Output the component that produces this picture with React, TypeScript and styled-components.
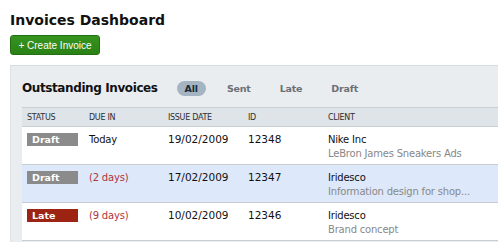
import styled, { createGlobalStyle } from 'styled-components';

type Status = 'draft' | 'late';

interface Invoice {
  status: Status;
  due: string;
  overdue: boolean;
  issued: string;
  id: string;
  client: string;
  project: string;
}

const invoices: Invoice[] = [
  { status: 'draft', due: 'Today', overdue: false, issued: '19/02/2009', id: '12348', client: 'Nike Inc', project: 'LeBron James Sneakers Ads' },
  { status: 'draft', due: '(2 days)', overdue: true, issued: '17/02/2009', id: '12347', client: 'Iridesco', project: 'Information design for shop...' },
  { status: 'late', due: '(9 days)', overdue: true, issued: '10/02/2009', id: '12346', client: 'Iridesco', project: 'Brand concept' },
];

const tabs = ['All', 'Sent', 'Late', 'Draft'];

const GlobalStyle = createGlobalStyle`
  html, body {
    margin: 0;
    padding: 0;
    background: #fff;
  }
  body {
    font-family: "DejaVu Sans", Verdana, sans-serif;
    color: #111;
    overflow: hidden;
  }
`;

const Page = styled.div`
  padding: 11px 0 0 10px;
`;

const Title = styled.h1`
  margin: 0;
  font-size: 14px;
  line-height: 18px;
  font-weight: bold;
  color: #111;
`;

const CreateButton = styled.button`
  display: block;
  margin-top: 6px;
  width: 90px;
  height: 20px;
  padding: 0;
  border: 1px solid #226f12;
  border-radius: 3px;
  background: linear-gradient(#37941f, #2a8116);
  color: #fff;
  font-family: "Liberation Sans", Arial, sans-serif;
  font-size: 10px;
  cursor: pointer;
`;

const Panel = styled.section`
  margin-top: 10px;
  background: #e9edf0;
  border-top: 1px solid #d6dbe0;
  border-left: 1px solid #dde2e6;
  padding-left: 11px;
  min-height: 200px;
`;

const PanelHeader = styled.div`
  display: flex;
  align-items: center;
  padding: 15px 0 11px;
`;

const PanelTitle = styled.h2`
  margin: 0;
  font-size: 12px;
  line-height: 15px;
  font-weight: bold;
  letter-spacing: -0.4px;
  color: #111;
`;

const Tabs = styled.nav`
  display: flex;
  gap: 13px;
  margin-left: 19px;
`;

const Tab = styled.span<{ $active?: boolean }>`
  height: 15px;
  line-height: 15px;
  padding: 0 8px;
  border-radius: 8px;
  font-size: 9.5px;
  font-weight: bold;
  letter-spacing: -0.2px;
  background: ${(p) => (p.$active ? '#a4b4c2' : 'transparent')};
  color: ${(p) => (p.$active ? '#1d2a35' : '#6b7076')};
`;

const Table = styled.div`
  background: #fff;
  border-top: 1px solid #c9cfd4;
`;

const Row = styled.div<{ $highlight?: boolean }>`
  display: grid;
  grid-template-columns: 62px 79px 80px 80px 1fr;
  padding-left: 5px;
  min-height: 38px;
  border-bottom: 1px solid #c8cdd2;
  background: ${(p) => (p.$highlight ? '#dde8fb' : '#fff')};
  align-items: start;
  padding-top: 6px;
  box-sizing: border-box;
`;

const HeadRow = styled.div`
  display: grid;
  grid-template-columns: 62px 79px 80px 80px 1fr;
  padding-left: 5px;
  height: 18px;
  align-items: center;
  background: #dfe4e8;
  border-bottom: 1px solid #c9ced3;
`;

const HeadCell = styled.span`
  font-size: 8px;
  letter-spacing: -0.3px;
  text-transform: uppercase;
  color: #2b2f33;
`;

const Badge = styled.span<{ $status: Status }>`
  display: block;
  width: 51px;
  height: 13px;
  line-height: 13px;
  padding-left: 5px;
  box-sizing: border-box;
  font-size: 9.5px;
  font-weight: bold;
  color: #fff;
  background: ${(p) => (p.$status === 'late' ? '#9d2412' : '#8b8b8b')};
`;

const Cell = styled.span<{ $overdue?: boolean }>`
  font-size: 10.5px;
  line-height: 13px;
  color: ${(p) => (p.$overdue ? '#b1343a' : '#111')};
`;

const TextCell = styled(Cell)`
  font-size: 10px;
  letter-spacing: -0.2px;
`;

const ClientCell = styled.div`
  display: flex;
  flex-direction: column;
  font-size: 10px;
  letter-spacing: -0.2px;
  line-height: 13.5px;
`;

const Client = styled.span`
  color: #111;
`;

const Project = styled.span`
  color: #888;
`;

export default function App() {
  return (
    <>
      <GlobalStyle />
      <Page>
        <Title>Invoices Dashboard</Title>
        <CreateButton>+ Create Invoice</CreateButton>
        <Panel>
          <PanelHeader>
            <PanelTitle>Outstanding Invoices</PanelTitle>
            <Tabs>
              {tabs.map((t, i) => (
                <Tab key={t} $active={i === 0}>
                  {t}
                </Tab>
              ))}
            </Tabs>
          </PanelHeader>
          <Table>
            <HeadRow>
              <HeadCell>Status</HeadCell>
              <HeadCell>Due in</HeadCell>
              <HeadCell>Issue date</HeadCell>
              <HeadCell>ID</HeadCell>
              <HeadCell>Client</HeadCell>
            </HeadRow>
            {invoices.map((inv, i) => (
              <Row key={inv.id} $highlight={i === 1}>
                <Badge $status={inv.status}>{inv.status === 'late' ? 'Late' : 'Draft'}</Badge>
                <TextCell $overdue={inv.overdue}>{inv.due}</TextCell>
                <Cell>{inv.issued}</Cell>
                <Cell>{inv.id}</Cell>
                <ClientCell>
                  <Client>{inv.client}</Client>
                  <Project>{inv.project}</Project>
                </ClientCell>
              </Row>
            ))}
          </Table>
        </Panel>
      </Page>
    </>
  );
}
